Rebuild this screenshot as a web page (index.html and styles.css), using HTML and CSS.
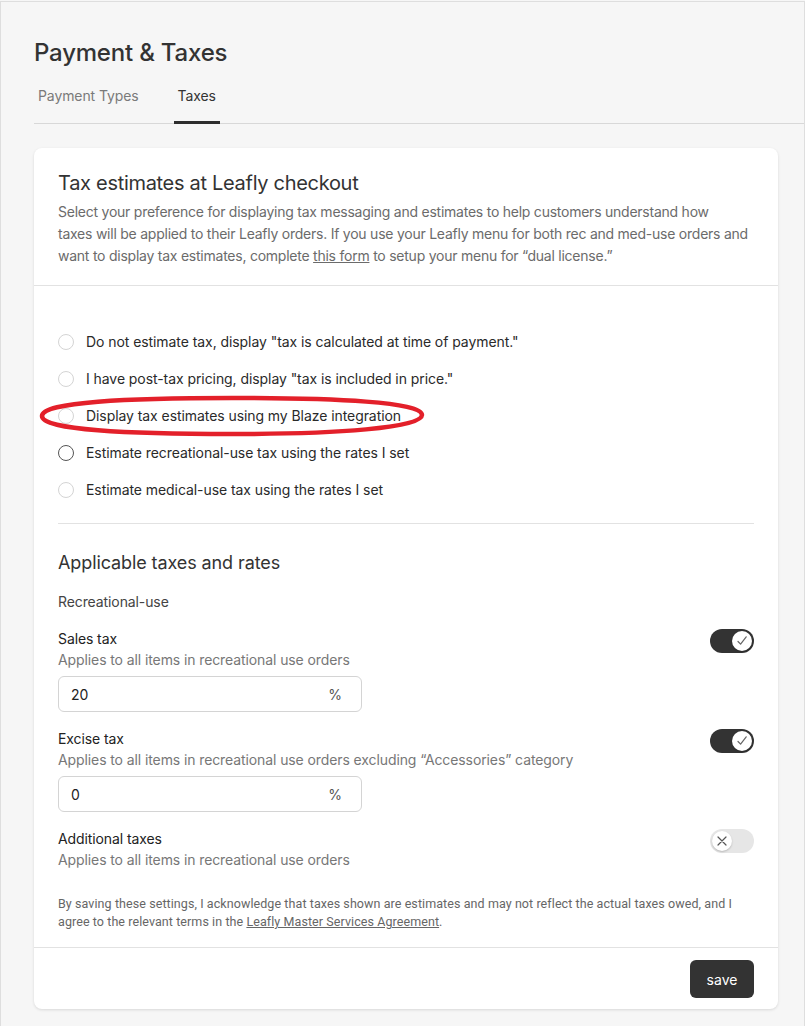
FILE: index.html
```html
<!DOCTYPE html>
<html lang="en">
<head>
<meta charset="utf-8">
<title>Payment &amp; Taxes</title>
<link rel="stylesheet" href="styles.css">
</head>
<body>
<div class="frame">
  <h1 class="page-title">Payment &amp; Taxes</h1>
  <nav class="tabs">
    <span class="tab">Payment Types</span>
    <span class="tab active">Taxes</span>
  </nav>

  <section class="card">
    <header class="card-head">
      <h2 class="card-title">Tax estimates at Leafly checkout</h2>
      <p class="card-desc">Select your preference for displaying tax messaging and estimates to help customers understand how<br>taxes will be applied to their Leafly orders. If you use your Leafly menu for both rec and med-use orders and<br>want to display tax estimates, complete <a class="link" href="#">this form</a> to setup your menu for “dual license.”</p>
    </header>

    <div class="card-body">
      <ul class="radios">
        <li class="radio-row"><span class="radio"></span>Do not estimate tax, display "tax is calculated at time of payment."</li>
        <li class="radio-row"><span class="radio"></span>I have post-tax pricing, display "tax is included in price."</li>
        <li class="radio-row"><span class="radio"></span>Display tax estimates using my Blaze integration</li>
        <li class="radio-row"><span class="radio dark"></span>Estimate recreational-use tax using the rates I set</li>
        <li class="radio-row"><span class="radio"></span>Estimate medical-use tax using the rates I set</li>
      </ul>

      <hr class="divider">

      <h3 class="section-title">Applicable taxes and rates</h3>
      <div class="group-label">Recreational-use</div>

      <div class="field">
        <div class="field-head">
          <div>
            <div class="field-title">Sales tax</div>
            <div class="field-desc">Applies to all items in recreational use orders</div>
          </div>
          <span class="toggle on"><span class="knob"><svg viewBox="0 0 20 20" width="20" height="20"><path d="M6 10.5 L8.6 13.2 L14.2 5.8" fill="none" stroke="#666" stroke-width="1.2" stroke-linecap="round" stroke-linejoin="round"/></svg></span></span>
        </div>
        <div class="input"><span class="value">20</span><span class="unit">%</span></div>
      </div>

      <div class="field">
        <div class="field-head">
          <div>
            <div class="field-title">Excise tax</div>
            <div class="field-desc">Applies to all items in recreational use orders excluding “Accessories” category</div>
          </div>
          <span class="toggle on"><span class="knob"><svg viewBox="0 0 20 20" width="20" height="20"><path d="M6 10.5 L8.6 13.2 L14.2 5.8" fill="none" stroke="#666" stroke-width="1.2" stroke-linecap="round" stroke-linejoin="round"/></svg></span></span>
        </div>
        <div class="input"><span class="value">0</span><span class="unit">%</span></div>
      </div>

      <div class="field">
        <div class="field-head">
          <div>
            <div class="field-title">Additional taxes</div>
            <div class="field-desc">Applies to all items in recreational use orders</div>
          </div>
          <span class="toggle off"><span class="knob"><svg viewBox="0 0 20 20" width="20" height="20"><path d="M6 6 L14 14 M14 6 L6 14" fill="none" stroke="#555" stroke-width="1.2" stroke-linecap="round"/></svg></span></span>
        </div>
      </div>

      <p class="disclaimer">By saving these settings, I acknowledge that taxes shown are estimates and may not reflect the actual taxes owed, and I agree to the relevant terms in the <a class="link" href="#">Leafly Master Services Agreement</a>.</p>
    </div>

    <footer class="card-foot">
      <button class="save">save</button>
    </footer>
  </section>
</div>

<svg class="annotation" width="392" height="44" viewBox="0 0 392 44" aria-hidden="true">
  <path d="M4 22 C4 8 90 4 194 4 C298 4 384 8 384 21 C384 34 298 40 194 40 C90 40 4 36 4 22 Z" fill="none" stroke="#e3202a" stroke-width="4.5"/>
</svg>
</body>
</html>
```

FILE: styles.css
```css
* { box-sizing: border-box; }

html, body {
  margin: 0;
  padding: 0;
}

body {
  background: #f6f6f6;
  font-family: "Inter", "Noto Sans", "Liberation Sans", sans-serif;
  letter-spacing: -0.1px;
  color: #222;
  position: relative;
  min-height: 1026px;
}

.frame {
  margin-top: 1px;
  border: 1px solid #dedede;
  border-bottom: none;
  padding: 0 26px 0 33px;
  min-height: 1025px;
}

.page-title {
  margin: 0;
  padding-top: 37px;
  font-size: 24px;
  line-height: 28px;
  font-weight: 500;
  color: #333;
  letter-spacing: -0.2px;
}

.tabs {
  display: flex;
  gap: 31px;
  margin-top: 19px;
  border-bottom: 1px solid #d8d8d8;
  margin-right: -26px;
}

.tab {
  padding: 0 4px 15px;
  font-size: 14px;
  line-height: 20px;
  color: #7a7a7a;
  border-bottom: 3px solid transparent;
  margin-bottom: -1px;
}

.tab.active {
  color: #333;
  border-bottom-color: #2d2d2d;
}

.card {
  margin-top: 24px;
  background: #fff;
  border-radius: 8px;
  box-shadow: 0 1px 3px rgba(0,0,0,0.12);
}

.card-head {
  padding: 22px 24px 18px;
  border-bottom: 1px solid #e2e2e2;
}

.card-title {
  margin: 0;
  font-size: 20px;
  line-height: 26px;
  font-weight: 400;
  color: #333;
  letter-spacing: -0.3px;
}

.card-desc {
  margin: 5px 0 0;
  font-size: 14px;
  line-height: 22px;
  color: #6b6b6b;
  letter-spacing: -0.24px;
  white-space: nowrap;
}

.link {
  color: inherit;
  text-decoration: underline;
}

.card-body {
  padding: 45px 24px 16px;
  border-bottom: 1px solid #e2e2e2;
}

.radios {
  list-style: none;
  margin: 0;
  padding: 0;
  display: flex;
  flex-direction: column;
  gap: 16px;
}

.radio-row {
  display: flex;
  align-items: center;
  gap: 12px;
  font-size: 14px;
  line-height: 21px;
  color: #2a2a2a;
  letter-spacing: -0.07px;
}

.radio {
  width: 16px;
  height: 16px;
  border-radius: 50%;
  border: 1px solid #d4d4d4;
  flex: none;
  background: #fff;
}

.radio.dark {
  border-color: #555;
}

.divider {
  border: 0;
  border-top: 1px solid #e2e2e2;
  margin: 23px 0 0;
}

.section-title {
  margin: 27px 0 0;
  font-size: 18px;
  line-height: 24px;
  font-weight: 400;
  color: #333;
}

.group-label {
  margin-top: 17px;
  font-size: 14px;
  line-height: 20px;
  color: #444;
}

.field {
  margin-top: 17px;
}

.field-head {
  display: flex;
  justify-content: space-between;
  align-items: flex-start;
}

.field-title {
  font-size: 14px;
  line-height: 20px;
  color: #222;
}

.field-desc {
  margin-top: 1px;
  font-size: 14px;
  line-height: 20px;
  color: #777;
}

.toggle {
  width: 44px;
  height: 24px;
  border-radius: 12px;
  display: flex;
  align-items: center;
  padding: 2px;
  flex: none;
}

.toggle.on {
  background: #333;
  justify-content: flex-end;
}

.toggle.off {
  background: #e6e6e6;
  justify-content: flex-start;
}

.knob {
  width: 20px;
  height: 20px;
  border-radius: 50%;
  background: #fff;
  display: block;
  box-shadow: 0 1px 2px rgba(0,0,0,0.2);
}

.knob svg { display: block; }

.input {
  margin-top: 6px;
  width: 304px;
  height: 36px;
  border: 1px solid #d4d4d4;
  border-radius: 6px;
  display: flex;
  align-items: center;
  justify-content: space-between;
  padding: 0 19px 0 12px;
  font-size: 14px;
  color: #222;
}

.unit { color: #555; }

.disclaimer {
  margin: 25px 0 0;
  font-family: "Roboto", "Inter", sans-serif;
  letter-spacing: 0.08px;
  font-size: 12.5px;
  line-height: 18px;
  color: #666;
}

.card-foot {
  display: flex;
  justify-content: flex-end;
  padding: 12px 24px 11px;
}

.save {
  width: 64px;
  height: 38px;
  border: 0;
  border-radius: 6px;
  background: #333;
  color: #fff;
  font-family: "Inter", sans-serif;
  font-size: 14px;
}

.annotation {
  position: absolute;
  left: 38px;
  top: 394px;
}
```
